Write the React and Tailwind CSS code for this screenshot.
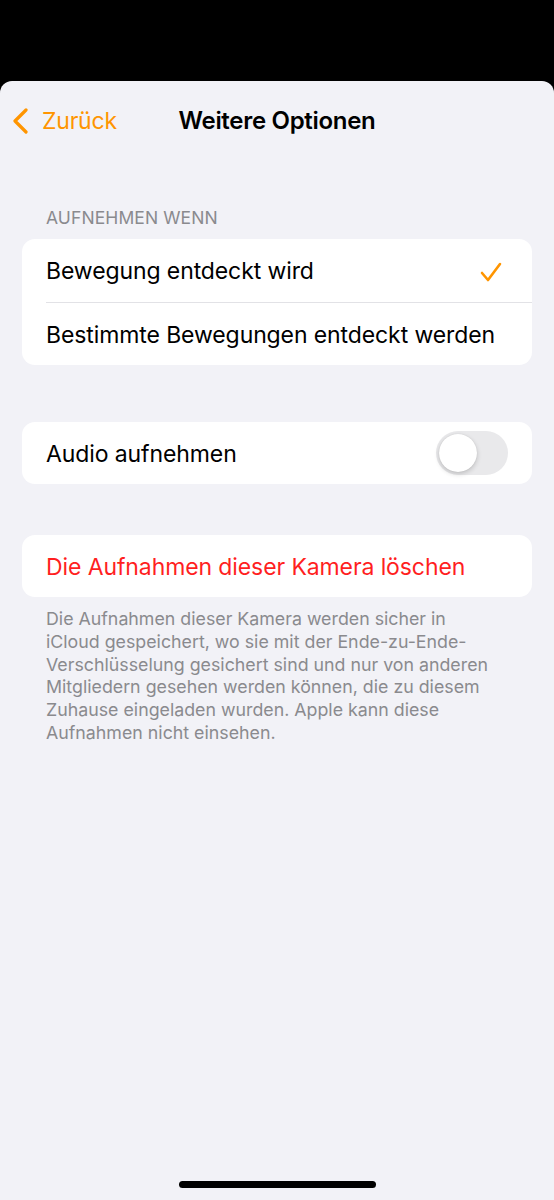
import React from "react";

export default function App() {
  const font = { fontFamily: 'Inter, "Liberation Sans", sans-serif' };
  return (
    <div className="w-[554px] h-[1200px] bg-black flex flex-col" style={font}>
      <div className="h-[81px] shrink-0" />
      <div className="flex-1 bg-[#f2f2f7] rounded-t-[12px] flex flex-col relative">
        {/* Nav */}
        <div className="h-[80px] flex items-center relative">
          <div className="absolute left-[12px] top-0 h-[80px] flex items-center gap-[13px] text-[#ff9500]">
            <svg width="17" height="26" viewBox="0 0 17 26" fill="none">
              <path d="M14 2 L3 13 L14 24" stroke="#ff9500" strokeWidth="3.2" strokeLinecap="round" strokeLinejoin="round" />
            </svg>
            <span className="text-[23px] tracking-[-0.2px]">Zurück</span>
          </div>
          <div className="w-full text-center text-[24px] font-semibold text-black tracking-[-0.3px]">
            Weitere Optionen
          </div>
        </div>

        <div className="px-[22px] flex flex-col">
          <div className="mt-[47px] pl-[24px] text-[17.5px] text-[#8a8a8e] leading-[20px] tracking-[0.1px]">
            AUFNEHMEN WENN
          </div>
          <div className="mt-[11px] bg-white rounded-[13px] flex flex-col">
            <div className="h-[63px] flex items-center justify-between pl-[24px] pr-[30px] pt-[2px]">
              <span className="text-[23px] text-black tracking-[-0.1px]">Bewegung entdeckt wird</span>
              <svg width="22" height="20" viewBox="0 0 22 20" fill="none">
                <path d="M2 11 L8 18 L20 2" stroke="#ff9500" strokeWidth="2.6" strokeLinecap="round" strokeLinejoin="round" />
              </svg>
            </div>
            <div className="ml-[24px] h-px bg-[#e2e2e6]" />
            <div className="h-[62px] flex items-center pl-[24px] pt-[2px]">
              <span className="text-[23px] text-black tracking-[-0.1px]">Bestimmte Bewegungen entdeckt werden</span>
            </div>
          </div>

          <div className="mt-[57px] bg-white rounded-[13px] h-[62px] flex items-center justify-between pl-[24px] pr-[24px]">
            <span className="text-[23px] text-black tracking-[-0.1px] pt-[2px]">Audio aufnehmen</span>
            <div className="w-[72px] h-[44px] rounded-full bg-[#e9e9eb] p-[3px] flex items-center">
              <div className="w-[38px] h-[38px] rounded-full bg-white shadow-[0_2px_5px_rgba(0,0,0,0.18),0_0_1px_rgba(0,0,0,0.15)]" />
            </div>
          </div>

          <div className="mt-[51px] bg-white rounded-[13px] h-[62px] flex items-center pl-[24px] pt-[2px]">
            <span className="text-[23px] text-[#ff1f1f] tracking-[-0.1px]">Die Aufnahmen dieser Kamera löschen</span>
          </div>

          <div className="mt-[11px] pl-[24px] pr-[30px] text-[17.8px] leading-[22.8px] text-[#8a8a8e]">
            Die Aufnahmen dieser Kamera werden sicher in iCloud gespeichert, wo sie mit der Ende-zu-Ende-Verschlüsselung gesichert sind und nur von anderen Mitgliedern gesehen werden können, die zu diesem Zuhause eingeladen wurden. Apple kann diese Aufnahmen nicht einsehen.
          </div>
        </div>

        <div className="absolute left-[179px] bottom-[12px] w-[197px] h-[7px] rounded-full bg-black" />
      </div>
    </div>
  );
}
